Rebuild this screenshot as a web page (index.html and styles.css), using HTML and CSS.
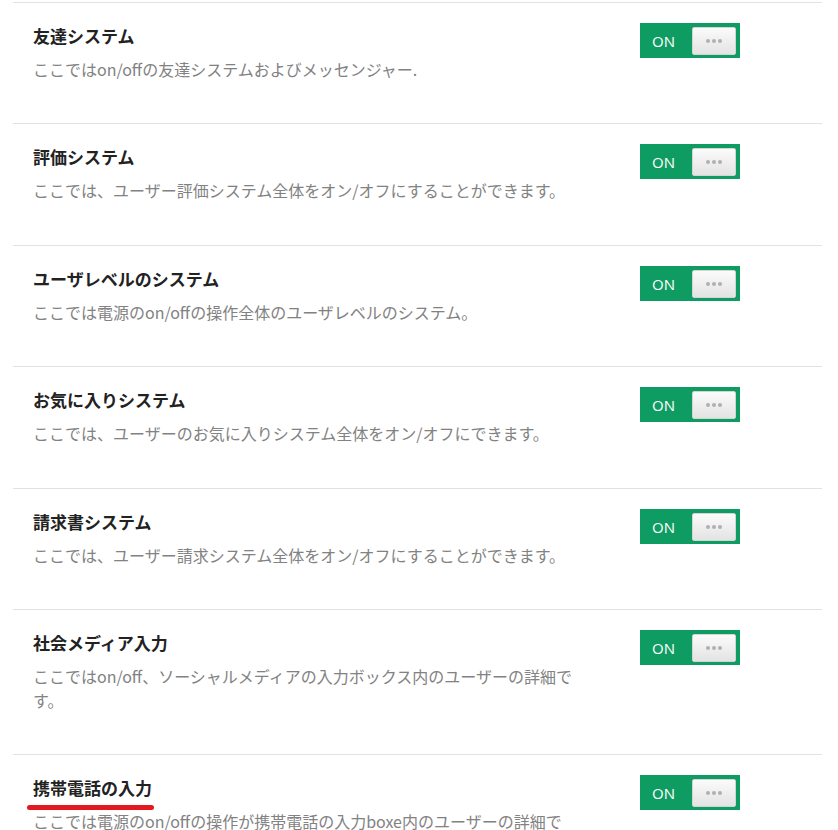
FILE: index.html
```html
<!DOCTYPE html>
<html>
<head>
  <meta charset="utf-8">
  <title>設定</title>
  <link rel="stylesheet" href="styles.css">
</head>
<body>
  <div class="settings">
    <div class="setting">
      <div class="info">
        <div class="title">友達システム</div>
        <div class="desc">ここではon/offの友達システムおよびメッセンジャー.</div>
      </div>
      <div class="toggle"><span class="label">ON</span><span class="knob"><i></i><i></i><i></i></span></div>
    </div>

    <div class="setting">
      <div class="info">
        <div class="title">評価システム</div>
        <div class="desc">ここでは、ユーザー評価システム全体をオン/オフにすることができます。</div>
      </div>
      <div class="toggle"><span class="label">ON</span><span class="knob"><i></i><i></i><i></i></span></div>
    </div>

    <div class="setting">
      <div class="info">
        <div class="title">ユーザレベルのシステム</div>
        <div class="desc">ここでは電源のon/offの操作全体のユーザレベルのシステム。</div>
      </div>
      <div class="toggle"><span class="label">ON</span><span class="knob"><i></i><i></i><i></i></span></div>
    </div>

    <div class="setting">
      <div class="info">
        <div class="title">お気に入りシステム</div>
        <div class="desc">ここでは、ユーザーのお気に入りシステム全体をオン/オフにできます。</div>
      </div>
      <div class="toggle"><span class="label">ON</span><span class="knob"><i></i><i></i><i></i></span></div>
    </div>

    <div class="setting">
      <div class="info">
        <div class="title">請求書システム</div>
        <div class="desc">ここでは、ユーザー請求システム全体をオン/オフにすることができます。</div>
      </div>
      <div class="toggle"><span class="label">ON</span><span class="knob"><i></i><i></i><i></i></span></div>
    </div>

    <div class="setting">
      <div class="info">
        <div class="title">社会メディア入力</div>
        <div class="desc">ここではon/off、ソーシャルメディアの入力ボックス内のユーザーの詳細です。</div>
      </div>
      <div class="toggle"><span class="label">ON</span><span class="knob"><i></i><i></i><i></i></span></div>
    </div>

    <div class="setting">
      <div class="info">
        <div class="title marked">携帯電話の入力</div>
        <div class="desc">ここでは電源のon/offの操作が携帯電話の入力boxe内のユーザーの詳細です。</div>
      </div>
      <div class="toggle"><span class="label">ON</span><span class="knob"><i></i><i></i><i></i></span></div>
    </div>
  </div>
</body>
</html>
```

FILE: styles.css
```css
* {
  box-sizing: border-box;
}

body {
  margin: 0;
  background: #fff;
  font-family: "Noto Sans CJK JP", "Noto Sans", sans-serif;
}

.settings {
  padding: 2px 16px 0 13px;
}

.setting {
  display: flex;
  justify-content: space-between;
  align-items: flex-start;
  border-top: 1px solid #e2e1e8;
  padding: 20px 82px 42.4px 20px;
}

.info {
  width: 550px;
  padding-top: 1px;
}

.title {
  position: relative;
  display: inline-block;
  font-size: 17px;
  font-weight: bold;
  line-height: 24px;
  color: #222;
}

.title.marked::after {
  content: "";
  position: absolute;
  left: -6px;
  right: -2px;
  bottom: -10px;
  height: 5px;
  border-radius: 3px;
  background: #e3191f;
}

.desc {
  margin-top: 9px;
  font-size: 16px;
  line-height: 24px;
  color: #828282;
}

.toggle {
  display: flex;
  align-items: center;
  justify-content: space-between;
  width: 100px;
  height: 35px;
  padding: 4px 4px 3px 12px;
  background: #0f9c63;
}

.toggle .label {
  color: #fff;
  font-size: 15px;
  font-family: "Open Sans", sans-serif;
}

.knob {
  display: flex;
  align-items: center;
  justify-content: center;
  gap: 2px;
  width: 44px;
  height: 28px;
  border: 1px solid #d4d4d4;
  border-radius: 2px;
  background: linear-gradient(#fbfbfb, #e3e3e3);
}

.knob i {
  width: 4px;
  height: 4px;
  border-radius: 50%;
  background: #b0b0b0;
}
```
